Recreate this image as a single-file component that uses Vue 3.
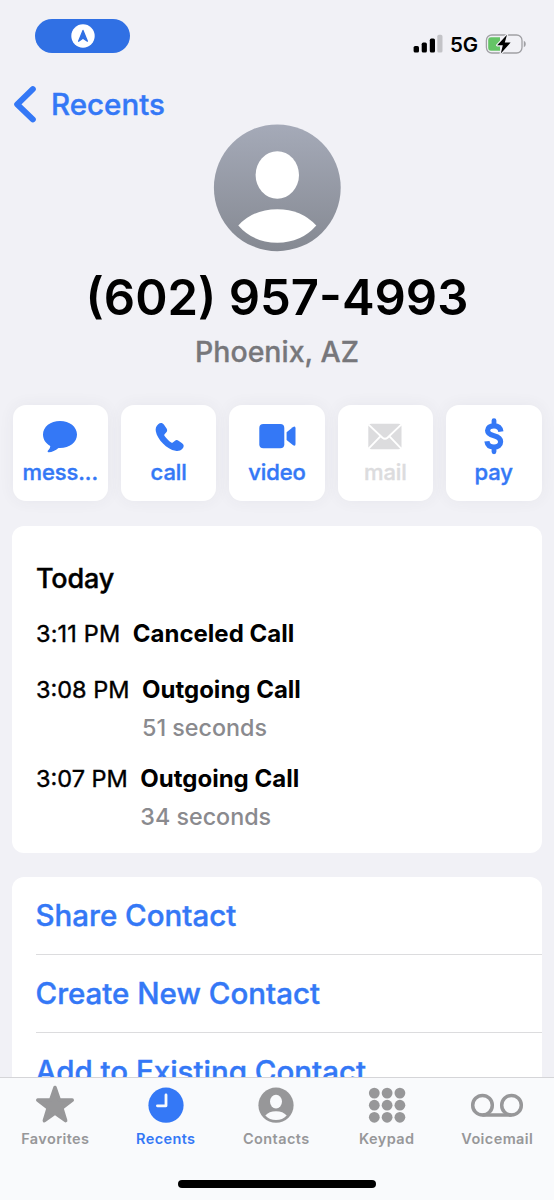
<script setup>
const actions = [
  { id: 'message', label: 'mess...' },
  { id: 'call', label: 'call' },
  { id: 'video', label: 'video' },
  { id: 'mail', label: 'mail', disabled: true },
  { id: 'pay', label: 'pay' },
]
const calls = [
  { time: '3:11 PM', kind: 'Canceled Call', id: 'c1' },
  { time: '3:08 PM', kind: 'Outgoing Call', duration: '51 seconds', id: 'c2' },
  { time: '3:07 PM', kind: 'Outgoing Call', duration: '34 seconds', id: 'c3' },
]
const options = [
  { id: 'share', label: 'Share Contact' },
  { id: 'create', label: 'Create New Contact' },
  { id: 'add', label: 'Add to Existing Contact' },
]
const tabs = [
  { id: 'favorites', label: 'Favorites' },
  { id: 'recents', label: 'Recents', active: true },
  { id: 'contacts', label: 'Contacts' },
  { id: 'keypad', label: 'Keypad' },
  { id: 'voicemail', label: 'Voicemail' },
]
const dots = [0, 1, 2, 3, 4, 5, 6, 7, 8]
</script>

<template>
  <div class="phone">
    <div class="status">
      <div class="pill">
        <svg width="24" height="24" viewBox="0 0 24 24">
          <circle cx="12" cy="12" r="11.7" fill="#fff" />
          <path d="M12 6.4 L16.4 17.2 L12 14.2 L7.6 17.2Z" fill="#3070e4" stroke="#3070e4" stroke-width="1.3" stroke-linejoin="round" />
        </svg>
      </div>
      <div class="signals">
        <svg class="bars" width="30" height="20" viewBox="0 0 30 20">
          <rect x="0.6" y="12" width="5.4" height="6.6" rx="1.6" />
          <rect x="8.7" y="8.6" width="5.2" height="10" rx="1.6" />
          <rect x="16.8" y="4.6" width="5.2" height="14" rx="1.6" />
          <rect x="24.3" y="0.8" width="5.2" height="17.8" rx="1.6" fill="#c3c3c7" />
        </svg>
        <span class="network">5G</span>
        <svg class="battery" width="42" height="22" viewBox="0 0 42 22">
          <rect x="1.4" y="2" width="35.6" height="18" rx="5.4" fill="none" stroke="#a0a0a4" stroke-width="1.3" />
          <path d="M38.8 7.8 Q40.8 8.8 40.8 11 Q40.8 13.2 38.8 14.2Z" fill="#a0a0a4" />
          <path d="M6 4.2 H15 V17.8 H6 Q3.2 17.8 3.2 14.6 V7.4 Q3.2 4.2 6 4.2Z" fill="#65c466" />
          <path d="M22 1.7 L12.2 12.2 H17.8 L15.8 20.5 L25.6 9.6 H19.8Z" fill="#000" stroke="#f1f1f6" stroke-width="2.4" paint-order="stroke" stroke-linejoin="round" />
        </svg>
      </div>
    </div>

    <div class="nav">
      <svg width="24" height="38" viewBox="0 0 24 38">
        <path d="M19.8 4.2 L4.2 19.3 L19.8 34.4" fill="none" stroke="#3478f6" stroke-width="6" stroke-linecap="round" stroke-linejoin="round" />
      </svg>
      <span class="back">Recents</span>
    </div>

    <div class="identity">
      <svg class="avatar" width="128" height="128" viewBox="0 0 128 128">
        <defs>
          <linearGradient id="avatarFill" x1="0" y1="0" x2="0" y2="1">
            <stop offset="0" stop-color="#a5aab8" />
            <stop offset="1" stop-color="#858992" />
          </linearGradient>
        </defs>
        <circle cx="64.3" cy="63.8" r="63.4" fill="url(#avatarFill)" />
        <ellipse cx="64.3" cy="51" rx="21.7" ry="23.7" fill="#fff" />
        <path d="M25.3 101.5 Q40.3 85.2 64.3 85.2 Q88.3 85.2 103.3 101.5 Q88.3 118.7 64.3 118.7 Q40.3 118.7 25.3 101.5Z" fill="#fff" />
      </svg>
      <h1 class="number">(602) 957-4993</h1>
      <div class="place">Phoenix, AZ</div>
    </div>

    <div class="actions">
      <div v-for="a in actions" :key="a.id" class="action" :class="[a.id, { disabled: a.disabled }]">
        <svg class="glyph" width="44" height="40" viewBox="0 0 44 40" fill="currentColor">
          <path v-if="a.id === 'message'" d="M22 5 C31.5 5 39 10.7 39 18.6 C39 26.4 31.5 32 22 32 H20.5 C17.4 34.8 13.4 36.4 10.4 36.2 C9.5 36.1 9.4 35.2 10 34.6 C11.3 33.3 12.2 31.7 12.3 30 C7.8 27.6 5 23.5 5 18.6 C5 10.7 12.5 5 22 5Z" />
          <path v-else-if="a.id === 'call'" transform="translate(-1 0)" d="M12.2 8.3 C14.2 6.3 16.5 6.6 18 8.7 L20.6 12.5 C21.6 14.1 21.2 15.3 20.1 16.6 L18.6 18.3 C18.1 18.9 18.2 19.4 18.6 20 C20.3 22.4 22.8 24.9 25.2 26.5 C25.8 26.9 26.3 26.9 26.8 26.5 L28.7 24.9 C30 23.9 31.2 23.8 32.5 24.7 L36.1 27.2 C38.1 28.6 38.3 30.9 36.4 32.8 C34.5 34.7 32.3 35.3 29.5 34.8 C20.9 33.3 11.3 23.4 9.8 15.2 C9.3 12.4 10.2 10.2 12.2 8.3Z" />
          <g v-else-if="a.id === 'video'">
            <rect x="4.3" y="8" width="25" height="24.2" rx="4" />
            <path d="M31.6 16.2 L37.8 11.2 Q40.5 9.3 40.5 12.2 V28 Q40.5 30.9 37.8 29 L31.6 24Z" />
          </g>
          <g v-else-if="a.id === 'mail'">
            <rect x="5.3" y="7.8" width="33.2" height="25.4" rx="3" />
            <path d="M5.6 8.6 L19.5 21.8 Q22 23.9 24.5 21.8 L38.2 8.6 M5.6 32.6 L17.4 20.4 M38.2 32.6 L26.5 20.4" fill="none" stroke="#fff" stroke-width="1.9" />
          </g>
          <g v-else fill="none" stroke="currentColor">
            <path d="M22 4.6 V8 M22 32.8 V35.8" stroke-width="4.8" stroke-linecap="round" />
            <path d="M28.9 15.6 C28.4 11.4 25.8 9.8 22 9.8 C18 9.8 15.6 11.6 15.6 14.6 C15.6 17.8 18.2 18.9 22 19.8 C26 20.8 28.6 22.2 28.6 25.8 C28.6 29.2 26 31 22 31 C18 31 15.4 29.2 14.9 25.2" stroke-width="5.2" />
          </g>
        </svg>
        <span class="action-label">{{ a.label }}</span>
      </div>
    </div>

    <section class="card log">
      <h2 class="day">Today</h2>
      <div v-for="c in calls" :key="c.id" class="entry" :class="c.id">
        <span class="time">{{ c.time }}</span>
        <div class="detail">
          <div class="kind">{{ c.kind }}</div>
          <div v-if="c.duration" class="duration">{{ c.duration }}</div>
        </div>
      </div>
    </section>

    <section class="card options">
      <div v-for="o in options" :key="o.id" class="option" :class="o.id"><span>{{ o.label }}</span></div>
    </section>

    <footer class="tabbar">
      <div class="tabs">
        <div v-for="t in tabs" :key="t.id" class="tab" :class="[t.id, { active: t.active }]">
          <svg width="56" height="42" viewBox="0 0 56 42" fill="currentColor">
            <path v-if="t.id === 'favorites'" d="M28 3.5 L32.2 15.9 L45.2 16.1 L34.8 24 L38.6 36.6 L28 29.1 L17.4 36.6 L21.2 24 L10.8 16.1 L23.8 15.9Z" stroke="currentColor" stroke-width="3.6" stroke-linejoin="round" />
            <g v-else-if="t.id === 'recents'">
              <circle cx="28" cy="21.2" r="17.6" />
              <path d="M28 11 V21.8 H19.4" fill="none" stroke="#f9fafc" stroke-width="2.8" stroke-linecap="round" stroke-linejoin="round" />
            </g>
            <g v-else-if="t.id === 'contacts'">
              <circle cx="28" cy="21.2" r="17.6" />
              <ellipse cx="28" cy="17.6" rx="6" ry="6.8" fill="#f9fafc" />
              <path d="M17.3 31.5 Q21 27.2 28 27.2 Q35 27.2 38.7 31.5 Q34.5 36 28 36 Q21.5 36 17.3 31.5Z" fill="#f9fafc" />
            </g>
            <g v-else-if="t.id === 'keypad'">
              <circle v-for="d in dots" :key="d" :cx="15.3 + (d % 3) * 12.8" :cy="9.1 + Math.floor(d / 3) * 12.1" r="5.4" />
            </g>
            <g v-else fill="none" stroke="currentColor" stroke-width="3.5">
              <circle cx="13.5" cy="21.2" r="9.8" />
              <circle cx="42.5" cy="21.2" r="9.8" />
              <path d="M13.5 31 H42.5" />
            </g>
          </svg>
          <span class="tab-label">{{ t.label }}</span>
        </div>
      </div>
      <div class="home"></div>
    </footer>
  </div>
</template>

<style>
body {
  margin: 0;
  background: #f1f1f6;
}
</style>

<style scoped>
.phone {
  width: 554px;
  height: 1200px;
  overflow: hidden;
  position: relative;
  background: #f1f1f6;
  color: #000;
  font-family: Inter, "Liberation Sans", sans-serif;
  white-space: nowrap;
}
.status {
  height: 84px;
  display: flex;
  justify-content: space-between;
  align-items: flex-start;
  box-sizing: border-box;
  padding: 19px 27px 0 35px;
}
.pill {
  width: 95px;
  height: 34px;
  border-radius: 17px;
  background: #3070e4;
  display: flex;
  align-items: center;
  justify-content: center;
}
.pill svg { margin-bottom: 1px; }
.signals {
  display: flex;
  align-items: center;
  height: 22px;
  margin-top: 14px;
}
.bars { margin-top: -1px; }
.network {
  width: 28px;
  margin: 1px 7px 0 7px;
  font-size: 20.5px;
  line-height: 22px;
  font-weight: 600;
  letter-spacing: -0.1px;
}
.nav {
  height: 40px;
  display: flex;
  align-items: center;
  padding-left: 13px;
}
.back {
  margin-left: 14px;
  color: #3478f6;
  font-size: 29.5px;
  font-weight: 500;
  -webkit-text-stroke: 0.4px #3478f6;
}
.identity {
  height: 281px;
  display: flex;
  flex-direction: column;
  align-items: center;
}
.avatar { flex: none; }
.number {
  margin: 15px 0 0;
  font-size: 49px;
  line-height: 61px;
  font-weight: 600;
}
.place {
  margin-top: 6px;
  font-size: 28.5px;
  line-height: 36px;
  font-weight: 500;
  color: #77777b;
  -webkit-text-stroke: 0.3px #77777b;
}
.actions {
  display: grid;
  grid-template-columns: repeat(5, 95.5px);
  justify-content: space-between;
  padding: 0 12.5px;
}
.action {
  height: 96px;
  border-radius: 13px;
  background: #fff;
  box-shadow: 0 0 16px rgba(60, 60, 90, 0.06);
  color: #3478f6;
  display: flex;
  flex-direction: column;
  align-items: center;
}
.disabled { color: #dcdcde; }
.glyph { margin-top: 11px; }
.action-label {
  margin-top: 2px;
  font-size: 22px;
  line-height: 28px;
  font-weight: 500;
  letter-spacing: -0.1px;
  -webkit-text-stroke: 0.4px currentColor;
}
.card {
  margin: 0 12px;
  background: #fff;
  border-radius: 12px;
}
.log {
  box-sizing: border-box;
  height: 327px;
  margin-top: 24.5px;
  padding: 37px 24px 0;
}
.day {
  margin: 0 0 24px;
  font-size: 27px;
  line-height: 32px;
  font-weight: 500;
  letter-spacing: -0.2px;
  -webkit-text-stroke: 0.4px #000;
}
.entry {
  display: flex;
  font-size: 23.5px;
  line-height: 30px;
}
.c1 .time { letter-spacing: 0.15px; }
.c2 { margin-top: 26px; }
.c3 { margin-top: 20.5px; }
.time { font-weight: 400; -webkit-text-stroke: 0.4px #000; }
.kind {
  font-size: 24px;
  font-weight: 700;
}
.detail { margin-left: 12.5px; }
.duration {
  margin-top: 8.5px;
  color: #8a8a8e;
  font-size: 23.3px;
  font-weight: 500;
}
.options { margin-top: 24px; height: 260px; }
.option {
  height: 77px;
  margin-left: 24px;
  border-bottom: 1px solid #dcdcde;
  display: flex;
  align-items: center;
  color: #3478f6;
  font-size: 29.5px;
  font-weight: 500;
  -webkit-text-stroke: 0.4px #3478f6;
}
.option span { margin-left: -0.5px; }
.tabbar {
  position: absolute;
  left: 0;
  right: 0;
  bottom: 0;
  height: 123px;
  box-sizing: border-box;
  border-top: 1px solid #d5d5d8;
  background: #f9fafc;
  display: flex;
  flex-direction: column;
  align-items: center;
}
.tabs {
  align-self: stretch;
  display: grid;
  grid-template-columns: repeat(5, 1fr);
  padding-right: 1.5px;
}
.tab {
  color: #979799;
  padding-top: 6px;
  display: flex;
  flex-direction: column;
  align-items: center;
}
.active { color: #3478f6; }
.tab-label {
  margin-top: 3px;
  font-size: 14.5px;
  line-height: 20px;
  font-weight: 600;
  letter-spacing: 0.4px;
}
.home {
  margin-top: 31px;
  width: 198px;
  height: 8px;
  border-radius: 4px;
  background: #000;
}
</style>
